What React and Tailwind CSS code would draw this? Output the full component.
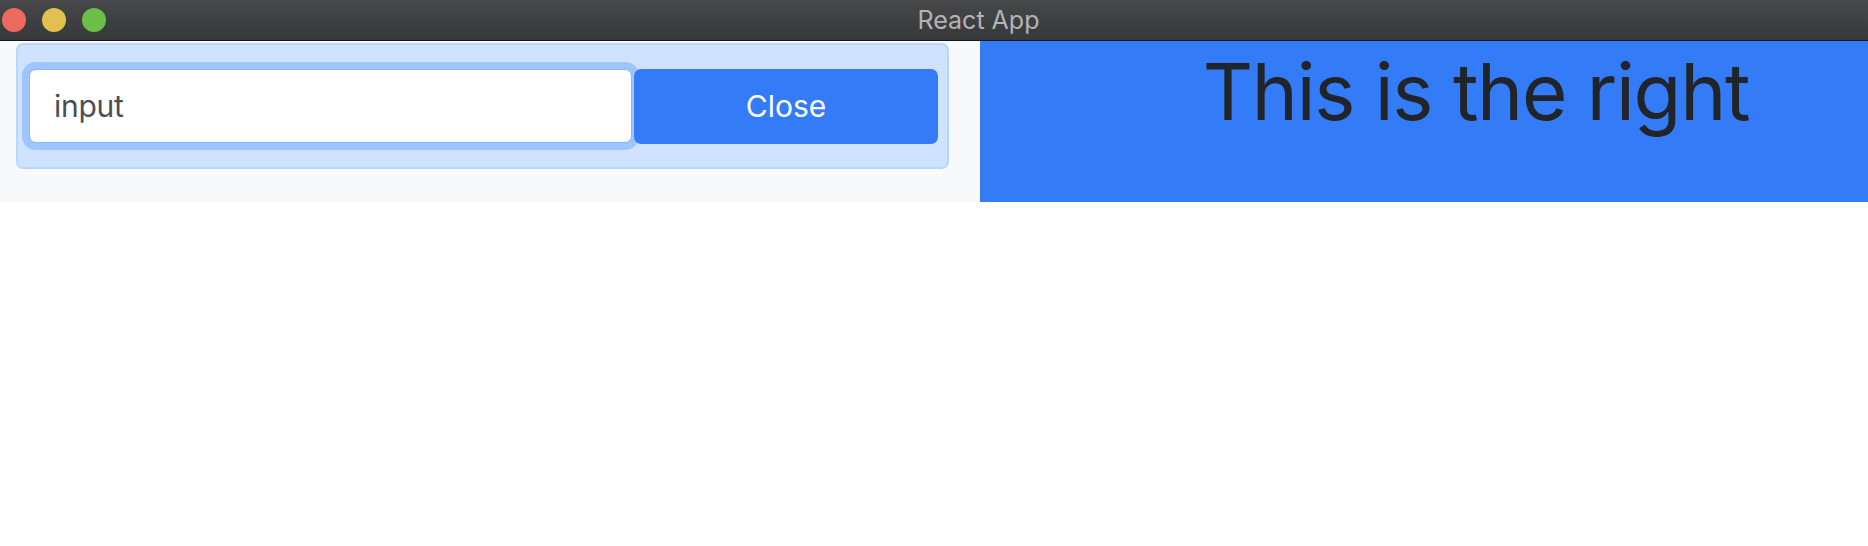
import React from "react";

export default function App() {
  return (
    <div className="w-[1868px] h-[546px] overflow-hidden bg-white font-['Inter',sans-serif]">
      <div className="w-[1960px]">
        {/* window title bar */}
        <div className="h-[41px] grid grid-cols-[1fr_auto_1fr] items-center bg-linear-to-b from-[#47484a] to-[#37383a] border-b border-[#151515]">
          <div className="flex items-center gap-4 pl-[2px]">
            <span className="w-6 h-6 rounded-full bg-[#ec6a5e]" />
            <span className="w-6 h-6 rounded-full bg-[#e1c04d]" />
            <span className="w-6 h-6 rounded-full bg-[#6bbe47]" />
          </div>
          <p className="text-[25px] leading-none text-[#b3b3b3] pr-[3px]">React App</p>
          <div />
        </div>

        <div className="flex h-[161px]">
          {/* left side */}
          <div className="w-[980px] bg-[#f8f9fa] pl-4 pt-[2px]">
            <div className="w-[933px] h-[126px] flex gap-[2px] rounded-[7px] border-2 border-[#bad6fd] bg-[#cfe2ff] pl-[11px] pt-6">
              <input
                readOnly
                value="input"
                className="w-[603px] h-[74px] px-6 rounded-[7px] border border-[#86b7fe] bg-white text-[30px] tracking-[-0.3px] text-[#4a4f55] outline-none shadow-[0_0_0_7px_rgba(13,110,253,0.25)]"
              />
              <button className="w-[304px] h-[75px] rounded-[7px] bg-[#347bf7] text-[30px] text-white">
                Close
              </button>
            </div>
          </div>

          {/* right side */}
          <div className="w-[980px] bg-[#347bf7] pt-3 pl-[12px] text-center">
            <h1 className="text-[78px] leading-none tracking-[-1.3px] text-[#212529]">
              This is the right
            </h1>
          </div>
        </div>
      </div>
    </div>
  );
}
